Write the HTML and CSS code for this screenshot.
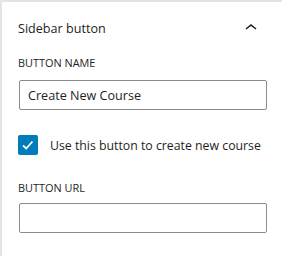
FILE: index.html
```html
<!DOCTYPE html>
<html lang="en">
<head>
  <meta charset="UTF-8" />
  <title>Sidebar button</title>
  <link rel="stylesheet" href="styles.css">
</head>
<body>
  <div class="panel">
    <div class="panel-header">
      <h2>Sidebar button</h2>
      <svg class="chevron" width="24" height="24" viewBox="0 0 24 24"><path d="M6.5 12.4L12 8l5.5 4.4-.9 1.2L12 10l-4.6 3.6-.9-1.2z"/></svg>
    </div>

    <div class="field">
      <label class="field-label" for="btn-name">BUTTON NAME</label>
      <input class="text-input" id="btn-name" type="text" value="Create New Course">
    </div>

    <div class="check-row">
      <span class="checkbox">
        <svg width="20" height="20" viewBox="0 0 20 20"><path d="M5 10.5l3.2 3 6.3-7" fill="none" stroke="#fff" stroke-width="1.8"/></svg>
      </span>
      <span class="check-label">Use this button to create new course</span>
    </div>

    <div class="field field-url">
      <label class="field-label" for="btn-url">BUTTON URL</label>
      <input class="text-input" id="btn-url" type="text" value="">
    </div>
  </div>
</body>
</html>
```

FILE: styles.css
```css
body {
  margin: 0;
  background: #fff;
  font-family: 'Open Sans', sans-serif;
  color: #1e1e1e;
}

.panel {
  height: 256px;
  box-sizing: border-box;
  border-left: 2px solid #e4e4e4;
  border-top: 2px solid #e4e4e4;
  padding: 0 15px 0 16px;
}

.panel-header {
  display: flex;
  align-items: center;
  justify-content: space-between;
  height: 52px;
}

.panel-header h2 {
  margin: 0;
  font-size: 12.6px;
  font-weight: 500;
}

.chevron {
  margin-right: 4px;
  fill: #1e1e1e;
}

.field {
  display: flex;
  flex-direction: column;
  margin-top: 1px;
}

.field-label {
  font-size: 10.9px;
  font-weight: 500;
  line-height: 16px;
  margin-bottom: 9px;
}

.field-url {
  margin-top: 25px;
}

.field-url .field-label {
  margin-bottom: 7px;
}

.text-input {
  box-sizing: border-box;
  width: 248px;
  height: 30px;
  margin-left: 1px;
  border: 1px solid #8c8c8c;
  border-radius: 2px;
  padding: 0 8px;
  font-family: 'Open Sans', sans-serif;
  font-size: 12.6px;
  color: #1e1e1e;
}

.check-row {
  display: flex;
  align-items: center;
  gap: 12px;
  margin-top: 25px;
}

.checkbox {
  width: 20px;
  height: 20px;
  border-radius: 2px;
  background: #007cba;
  display: flex;
}

.check-label {
  font-size: 12.3px;
  white-space: nowrap;
}
```
